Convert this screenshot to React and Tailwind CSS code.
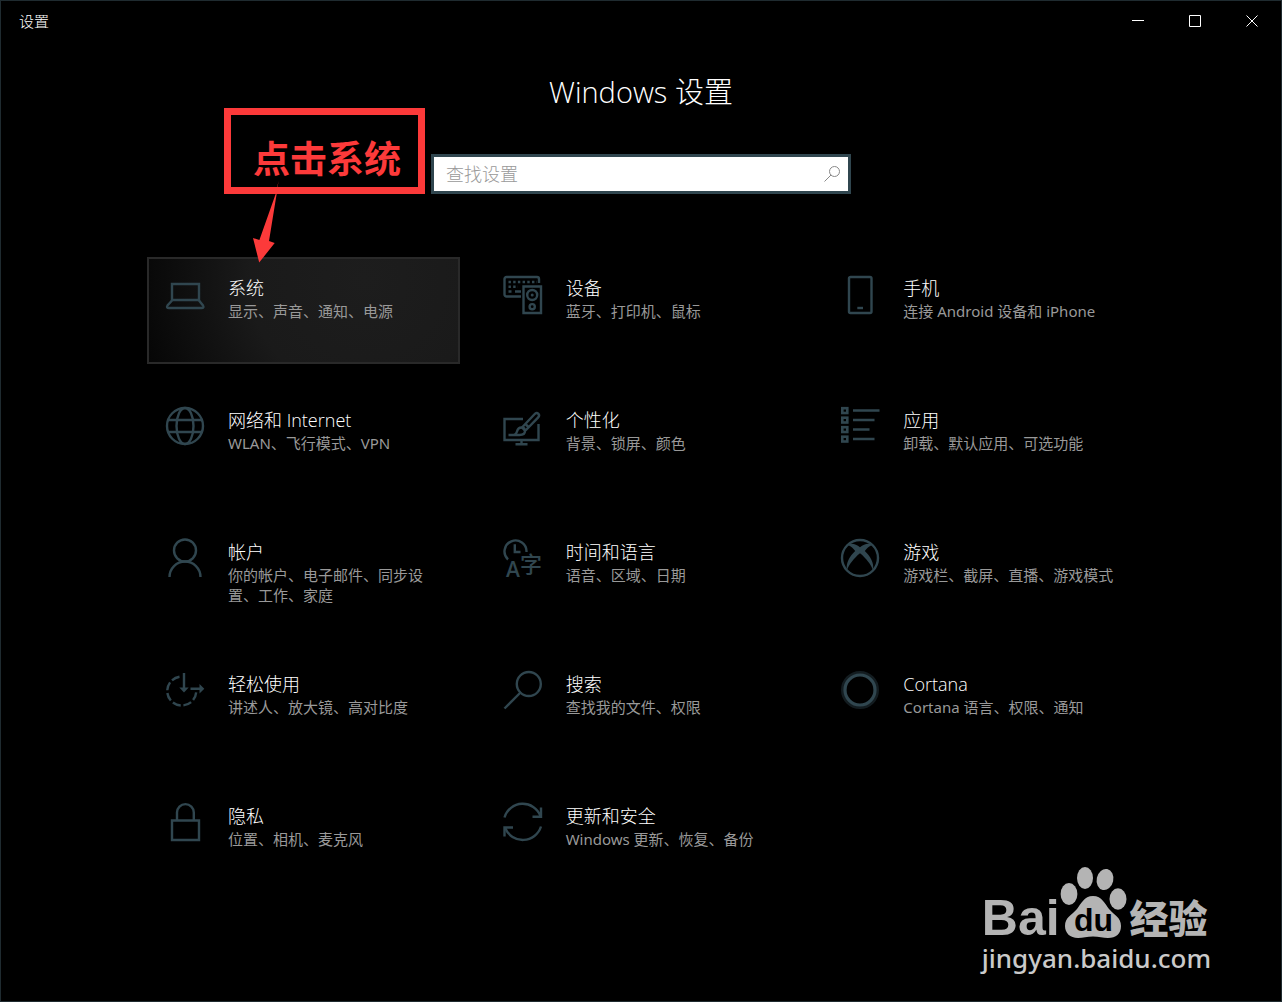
import React, { useState } from "react";

// every category icon is drawn on the same 40x40 grid
const Icon = ({ children }) => (
  <svg
    className="w-10 h-10 shrink-0 overflow-visible text-[#30464f]"
    viewBox="0 0 40 40"
    fill="none"
    stroke="currentColor"
    strokeWidth="2.4"
    aria-hidden="true"
  >
    {children}
  </svg>
);

const SystemIcon = () => (
  <Icon>
    <path d="M7 9H34V25H7Z" />
    <path d="M7 25.5L2.5 30.5Q1 33 4 33H36.5Q39.5 33 38 30.5L34 25.5" />
  </Icon>
);

const DevicesIcon = () => (
  <Icon>
    <path d="M18 21.5H3.5a2 2 0 0 1-2-2V4a2 2 0 0 1 2-2H34a2 2 0 0 1 2 2V8" />
    <path d="M5.5 7H34" strokeDasharray="2.4 2.3" />
    <path d="M5.5 11.7H15" strokeDasharray="2.4 2.3" />
    <path d="M5.5 16.5H8.5M12 16.5H18" />
    <path d="M20.5 11.5H38V38H20.5Z" />
    <circle cx="29.2" cy="20" r="5" />
    <circle cx="29.2" cy="20" r="1.5" fill="currentColor" stroke="none" />
    <circle cx="29.2" cy="31.7" r="2.6" />
  </Icon>
);

const PhoneIcon = () => (
  <Icon>
    <rect x="9" y="2" width="22.5" height="36" rx="1.5" />
    <path d="M17.3 33H23" />
  </Icon>
);

const NetworkIcon = () => (
  <Icon>
    <circle cx="20" cy="19" r="18" />
    <ellipse cx="20" cy="19" rx="8.5" ry="18" />
    <path d="M3 13H37M3 25H37" />
  </Icon>
);

const PersonalizationIcon = () => (
  <Icon>
    <path d="M20 12H1.5V33H35.5V17" />
    <path d="M18.5 33V37M12.5 37.2H24.5" />
    <path d="M19 20.5L31.5 7.2Q33.6 5 35.4 6.8Q37 8.6 35 10.7L22.5 23.5" />
    <path d="M19 20.5L22.5 24M22.8 17.5L26 20.5" />
    <path d="M5.5 28H16.5C20 28 22 26.5 22 24C22 21.8 20.5 20.5 18.5 20.5C15.5 20.5 14.5 22.5 14 24.5C13.5 26.5 12.5 27.5 11 28" />
  </Icon>
);

const AppsIcon = () => (
  <Icon>
    {[3.5, 13, 22.5, 32].map((y) => (
      <rect key={y} x="2.3" y={y - 2.3} width="5" height="4.8" strokeWidth="2.6" />
    ))}
    <path d="M13 3.5H39.5M13 13H34.5M13 22.5H29.5M13 32H34.5" />
  </Icon>
);

const AccountsIcon = () => (
  <Icon>
    <circle cx="20" cy="11.5" r="11" />
    <path d="M4.5 38a15.5 15.5 0 0 1 31 0" />
  </Icon>
);

const TimeIcon = () => (
  <Icon>
    <path d="M5 20.5A11 11 0 1 1 23.5 13" />
    <path d="M11.8 5.3V13H17.5" />
    <text
      x="3"
      y="38"
      className="font-['Open_Sans'] font-semibold text-[21px]"
      fill="currentColor"
      stroke="none"
    >
      A
    </text>
    <text
      x="17"
      y="33"
      className="font-['Noto_Sans_CJK_SC'] font-medium text-[22px]"
      fill="currentColor"
      stroke="none"
    >
      字
    </text>
  </Icon>
);

const GamingIcon = () => (
  <Icon>
    <circle cx="20" cy="19" r="18" />
    <path
      d="M7.5 6C12 3.4 16 5.6 20 8.2C24 5.6 28 3.4 32.5 6C29 7 26.5 9.5 24.8 12C30 17 34.5 24 33 31C31 25.5 26 19 20 14.2C14 19 9 25.5 7 31C5.5 24 10 17 15.2 12C13.5 9.5 11 7 7.5 6Z"
      fill="currentColor"
      stroke="none"
    />
  </Icon>
);

const EaseOfAccessIcon = () => (
  <Icon>
    <path d="M14.5 5.7A14.5 14.5 0 1 0 31.2 21" strokeDasharray="8.4 2.8" />
    <path d="M19 2V17M25.5 17.8H36" />
    <path
      d="M14.3 16.5H23.7L19 21.5ZM34.5 13L39.3 17.8L34.5 22.6Z"
      fill="currentColor"
      stroke="none"
    />
  </Icon>
);

const SearchIcon = () => (
  <Icon>
    <circle cx="25.8" cy="13" r="12" />
    <path d="M17 22L1.5 37.5" />
  </Icon>
);

const CortanaIcon = () => (
  <Icon>
    <circle cx="20" cy="19" r="17" strokeWidth="4" opacity="0.4" />
    <circle cx="20" cy="19" r="15" strokeWidth="3.2" />
  </Icon>
);

const PrivacyIcon = () => (
  <Icon>
    <path d="M7 17.5H34V37H7Z" />
    <path d="M12 17V9.5a8.3 8.3 0 0 1 16.8 0V17" />
  </Icon>
);

const UpdateIcon = () => (
  <Icon>
    <path d="M1.5 14.5A19 19 0 0 1 37.5 13" />
    <path d="M38 4.5V13.7H29.5" />
    <path d="M38 23.5A19 19 0 0 1 2.2 25" />
    <path d="M1.5 33.5V24.5H10" />
  </Icon>
);

const categories = [
  { title: "系统", desc: "显示、声音、通知、电源", icon: SystemIcon, active: true },
  { title: "设备", desc: "蓝牙、打印机、鼠标", icon: DevicesIcon },
  { title: "手机", desc: "连接 Android 设备和 iPhone", icon: PhoneIcon },
  { title: "网络和 Internet", desc: "WLAN、飞行模式、VPN", icon: NetworkIcon },
  { title: "个性化", desc: "背景、锁屏、颜色", icon: PersonalizationIcon },
  { title: "应用", desc: "卸载、默认应用、可选功能", icon: AppsIcon },
  { title: "帐户", desc: "你的帐户、电子邮件、同步设置、工作、家庭", icon: AccountsIcon },
  { title: "时间和语言", desc: "语音、区域、日期", icon: TimeIcon },
  { title: "游戏", desc: "游戏栏、截屏、直播、游戏模式", icon: GamingIcon },
  { title: "轻松使用", desc: "讲述人、放大镜、高对比度", icon: EaseOfAccessIcon },
  { title: "搜索", desc: "查找我的文件、权限", icon: SearchIcon },
  { title: "Cortana", desc: "Cortana 语言、权限、通知", icon: CortanaIcon },
  { title: "隐私", desc: "位置、相机、麦克风", icon: PrivacyIcon },
  { title: "更新和安全", desc: "Windows 更新、恢复、备份", icon: UpdateIcon },
];

const windowButtons = [
  { label: "最小化", path: "M0 5.5H12" },
  { label: "最大化", path: "M0.5 0.5H11.5V11.5H0.5Z" },
  { label: "关闭", path: "M0.5 0.5L11.5 11.5M11.5 0.5L0.5 11.5" },
];

const TitleBar = () => (
  <header className="flex items-center justify-between h-10 pl-[18px] pr-px">
    <span className="text-[15px] leading-5 font-light">设置</span>
    <div className="flex h-full">
      {windowButtons.map(({ label, path }) => (
        <button
          key={label}
          type="button"
          aria-label={label}
          className="flex items-center justify-center w-[57px] h-full hover:bg-[#1c1c1c]"
        >
          <svg className="w-3 h-3" viewBox="0 0 12 12" fill="none" stroke="white">
            <path d={path} />
          </svg>
        </button>
      ))}
    </div>
  </header>
);

const Category = ({ title, desc, icon: CategoryIcon, active }) => (
  <a
    href="#"
    className={`flex gap-[23px] h-full pl-4 pr-3 pt-4 border-2 ${
      active
        ? "border-[#292929] bg-[radial-gradient(circle_at_70%_20%,#1d1d1d_0%,#1a1a1a_50%,#060606_100%)]"
        : "border-transparent"
    }`}
  >
    <CategoryIcon />
    <span className="flex flex-col min-w-0">
      <span className="text-lg leading-[26px] font-light">{title}</span>
      <span className="font-['Noto_Sans','Noto_Sans_CJK_SC',sans-serif] text-[15px] leading-5 text-[#999999]">
        {desc}
      </span>
    </span>
  </a>
);

const Callout = () => (
  <div className="absolute left-[77px] top-[107px] text-[#fc3a3a] pointer-events-none">
    <div className="border-[7px] border-[#fc3a3a] pl-[22px] pr-[17px] pt-[21px] pb-[5px] text-[37px] leading-[46px] font-bold whitespace-nowrap">
      点击系统
    </div>
    <svg className="absolute left-7 top-[73px] w-7 h-[82px]" viewBox="0 0 28 82" fill="currentColor">
      <path d="M26.5 0L24.8 12L17 60L22.7 62L7.2 81.5L1 57L7.4 59L24 12Z" />
    </svg>
  </div>
);

const Watermark = () => (
  <div className="absolute right-[70px] bottom-[29px] text-[#b4b4b4] pointer-events-none">
    <div className="flex items-end">
      <span className="mb-1 font-['Liberation_Sans'] font-bold text-[50px] leading-[50px]">Bai</span>
      <svg className="w-[68px] h-[72px] mb-2" viewBox="0 0 68 72" fill="currentColor">
        <ellipse cx="9" cy="27" rx="8.4" ry="11" />
        <ellipse cx="25" cy="11" rx="8" ry="11" />
        <ellipse cx="45" cy="12.5" rx="8.3" ry="10.7" transform="rotate(12 45 12.5)" />
        <ellipse cx="58" cy="32" rx="8.5" ry="10.7" />
        <path d="M33 29C42 29 45 37 49 42C54 48 61 50 61 59C61 67 56 71 48 71C43 71 39 69.5 33 69.5C27 69.5 23 71 18 71C10 71 5 66 5 59C5 50 12 48 17 42C21 37 24 29 33 29Z" />
        <text
          x="14"
          y="64"
          className="font-['Liberation_Sans'] font-bold text-[32px]"
          fill="black"
        >
          du
        </text>
      </svg>
      <span className="pl-[2px] mb-[6px] font-['Noto_Sans_CJK_SC'] font-black text-[39px] leading-[50px]">
        经验
      </span>
    </div>
    <div className="-mt-[3px] text-right font-['Noto_Sans'] font-medium text-[26px] leading-7 text-[#cacaca]">
      jingyan.baidu.com
    </div>
  </div>
);

const App = () => {
  const [query, setQuery] = useState("");

  return (
    <div className="relative min-h-screen bg-black text-white border border-[#1f2b30] font-['Open_Sans','Noto_Sans_CJK_SC',sans-serif]">
      <TitleBar />

      <main className="max-w-[988px] mx-auto">
        <h1 className="mt-[31px] text-center text-[29px] leading-10 font-light">Windows 设置</h1>

        <form
          role="search"
          className="flex items-center w-[420px] h-10 mx-auto mt-[42px] border-3 border-[#30464f] bg-white"
          onSubmit={(e) => e.preventDefault()}
        >
          <input
            type="text"
            aria-label="查找设置"
            placeholder="查找设置"
            value={query}
            onChange={(e) => setQuery(e.target.value)}
            className="flex-1 min-w-0 h-full pl-3 text-lg font-light text-black placeholder:text-[#999999] outline-none"
          />
          <button type="submit" aria-label="搜索" className="px-2">
            <svg className="w-4 h-4" viewBox="0 0 16 16" fill="none" stroke="#888888">
              <circle cx="10.5" cy="5.5" r="5" />
              <path d="M7 9L0.5 15.5" />
            </svg>
          </button>
        </form>

        <ul className="grid grid-cols-3 gap-[25px] auto-rows-[107px] mt-[63px] pb-8">
          {categories.map((category) => (
            <li key={category.title}>
              <Category {...category} />
            </li>
          ))}
        </ul>
      </main>

      {/* same centred column as the content, so the note stays beside the search box */}
      <div className="absolute inset-x-0 top-0 max-w-[988px] mx-auto">
        <Callout />
      </div>
      <Watermark />
    </div>
  );
};

export default App;
